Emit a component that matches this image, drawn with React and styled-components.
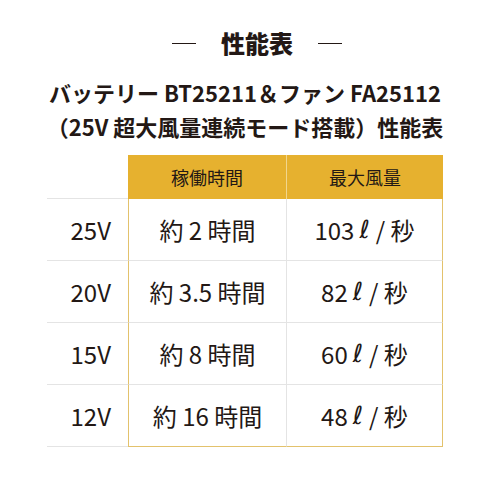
import React from 'react';
import styled, { createGlobalStyle } from 'styled-components';

const GlobalStyle = createGlobalStyle`
  * { box-sizing: border-box; }
  body {
    margin: 0;
    background: #ffffff;
    font-family: "Noto Sans CJK JP", "Noto Sans", sans-serif;
    color: #231815;
  }
`;

const GOLD = '#e6b12f';
const GOLD_LINE = '#e3c26c';
const GREY_LINE = '#e4e4e4';

const Page = styled.div`
  width: 490px;
  height: 490px;
  padding-top: 27px;
`;

// Title
const TitleRow = styled.div`
  display: flex;
  justify-content: center;
  align-items: center;
  gap: 25px;
  height: 32px;
  padding-left: 24px;
`;

const Dash = styled.span`
  width: 24px;
  border-top: 1px solid #231815;
`;

const Title = styled.h1`
  margin: 0;
  font-size: 24px;
  font-weight: 900;
  line-height: 32px;
`;

const Subtitle = styled.h2`
  margin: 16px 0 0;
  text-align: center;
  font-size: 22px;
  font-weight: 700;
  line-height: 34px;
`;

// Table
const Table = styled.div`
  display: grid;
  grid-template-columns: 81px 158px 157px;
  grid-template-rows: 44px repeat(4, 62px);
  width: 396px;
  margin: 12px auto 0;
`;

const Corner = styled.div`
  border-bottom: 1px solid ${GREY_LINE};
`;

const HeadCell = styled.div`
  display: flex;
  align-items: center;
  justify-content: center;
  background: ${GOLD};
  font-size: 18px;
  border-left: ${p => (p.$second ? '1px solid #f1d68e' : 'none')};
`;

const Label = styled.div`
  display: flex;
  align-items: center;
  justify-content: flex-end;
  padding-right: 17px;
  font-size: 24px;
  border-bottom: 1px solid ${GREY_LINE};
`;

const Cell = styled.div`
  display: flex;
  align-items: center;
  justify-content: center;
  font-size: 24px;
  white-space: pre;
  border-left: 1px solid ${p => (p.$second ? GREY_LINE : GOLD_LINE)};
  border-right: ${p => (p.$second ? `1px solid ${GOLD_LINE}` : 'none')};
  border-bottom: 1px solid ${p => (p.$last ? GOLD_LINE : GREY_LINE)};
`;

const Litre = styled.span`
  font-family: "DejaVu Sans", sans-serif;
  font-style: italic;
  font-size: 25px;
  margin: 0 6px 0 5px;
`;

const rows = [
  { volt: '25V', time: '約 2 時間', amount: '103' },
  { volt: '20V', time: '約 3.5 時間', amount: '82' },
  { volt: '15V', time: '約 8 時間', amount: '60' },
  { volt: '12V', time: '約 16 時間', amount: '48' },
];

const App = () => (
  <Page>
    <GlobalStyle />
    <TitleRow>
      <Dash />
      <Title>性能表</Title>
      <Dash />
    </TitleRow>
    <Subtitle>
      バッテリー BT25211＆ファン FA25112
      <br />
      （25V 超大風量連続モード搭載）性能表
    </Subtitle>
    <Table>
      <Corner />
      <HeadCell>稼働時間</HeadCell>
      <HeadCell $second>最大風量</HeadCell>
      {rows.map((r, i) => (
        <React.Fragment key={r.volt}>
          <Label>{r.volt}</Label>
          <Cell $last={i === rows.length - 1}>{r.time}</Cell>
          <Cell $second $last={i === rows.length - 1}>
            {r.amount}<Litre>ℓ</Litre>/ 秒
          </Cell>
        </React.Fragment>
      ))}
    </Table>
  </Page>
);

export default App;
